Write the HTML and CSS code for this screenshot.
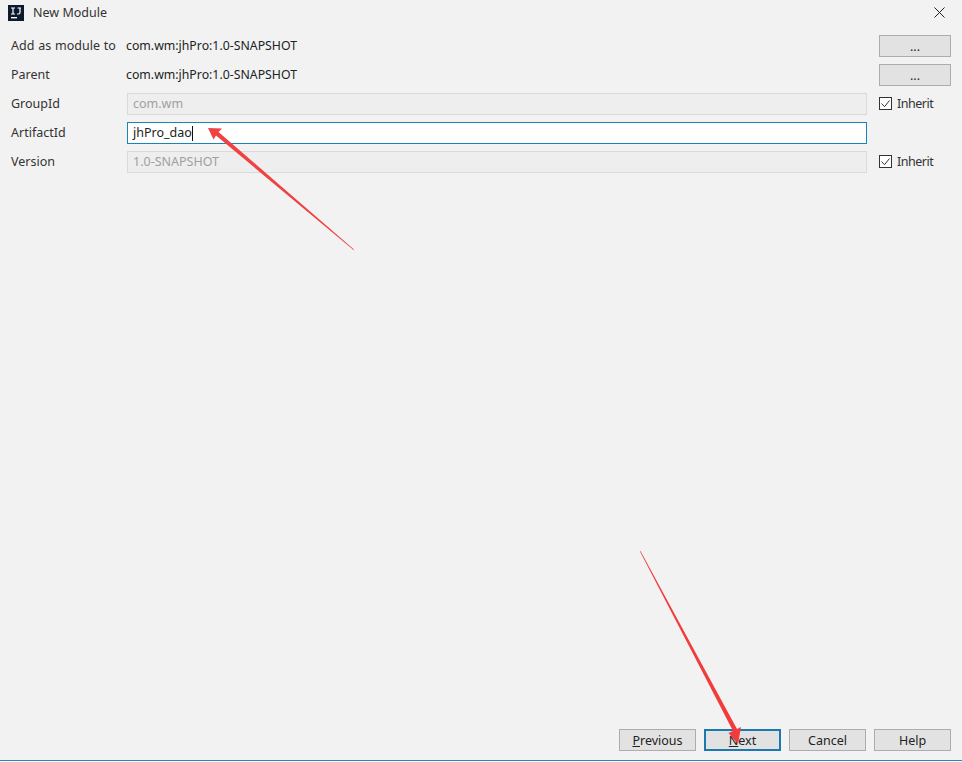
FILE: index.html
```html
<!DOCTYPE html>
<html lang="en">
<head>
<meta charset="utf-8">
<title>New Module</title>
<link rel="stylesheet" href="styles.css">
</head>
<body>
<div class="window">
  <header class="titlebar">
    <svg class="app-icon" width="16" height="16" viewBox="0 0 16 16">
      <rect width="16" height="16" fill="#0c1a2e"/>
      <rect x="3" y="12" width="6" height="1.4" fill="#fff"/>
      <path d="M3 3h4M5 3v6M3 9h4M9.5 3h3.5M12 3v4.5q0 1.5-1.5 1.5h-1.5" fill="none" stroke="#fff" stroke-width="1.2"/>
    </svg>
    <span class="title">New Module</span>
    <svg class="close" width="11" height="11" viewBox="0 0 11 11">
      <path d="M.5.5l10 10M10.5.5l-10 10" stroke="#222" stroke-width="1" fill="none"/>
    </svg>
  </header>
  <main class="form">
    <label class="lbl">Add as module to</label>
    <div class="value">com.wm:jhPro:1.0-SNAPSHOT</div>
    <button class="btn side">...</button>

    <label class="lbl">Parent</label>
    <div class="value">com.wm:jhPro:1.0-SNAPSHOT</div>
    <button class="btn side">...</button>

    <label class="lbl">GroupId</label>
    <div class="field disabled">com.wm</div>
    <div class="inherit"><span class="check"><svg width="13" height="13" viewBox="0 0 13 13"><path d="M2.5 6.5l3 3.2 5-6.2" fill="none" stroke="#333" stroke-width="1"/></svg></span>Inherit</div>

    <label class="lbl">ArtifactId</label>
    <div class="field active">jhPro_dao<span class="caret"></span></div>
    <div></div>

    <label class="lbl">Version</label>
    <div class="field disabled">1.0-SNAPSHOT</div>
    <div class="inherit"><span class="check"><svg width="13" height="13" viewBox="0 0 13 13"><path d="M2.5 6.5l3 3.2 5-6.2" fill="none" stroke="#333" stroke-width="1"/></svg></span>Inherit</div>
  </main>
  <footer class="footer">
    <button class="btn action"><u>P</u>revious</button>
    <button class="btn action primary"><u>N</u>ext</button>
    <button class="btn action">Cancel</button>
    <button class="btn action">Help</button>
  </footer>
  <div class="edge"></div>
  <div class="sliver"></div>
  <svg class="arrows" width="962" height="762" viewBox="0 0 962 762">
    <polygon points="208,128 222,128.5 218.5,132 354,249.5 353.5,250 216,135.5 213.5,139.5" fill="#f04242"/>
    <polygon points="738,744 728.5,733 733,731 640,551.5 640.5,551 737,729 741,727" fill="#f23c3c"/>
  </svg>
</div>
</body>
</html>
```
FILE: styles.css
```css
* { box-sizing: border-box; }
html, body { margin: 0; padding: 0; }
body {
  width: 962px;
  height: 762px;
  overflow: hidden;
  background: #f2f2f2;
  font-family: "Noto Sans", "Open Sans", sans-serif;
  font-size: 12.5px;
  color: #222;
}
.window {
  position: relative;
  height: 762px;
  display: flex;
  flex-direction: column;
  background: #f2f2f2;
}
.titlebar {
  height: 35px;
  flex: none;
  display: flex;
  align-items: flex-start;
  padding: 5px 17px 0 8px;
}
.app-icon { flex: none; }
.title { margin-left: 9px; line-height: 16px; color: #333; }
.close { margin-left: auto; margin-top: 2px; }
.form {
  display: grid;
  grid-template-columns: 116px 740px 72px;
  grid-auto-rows: 22px;
  row-gap: 7px;
  column-gap: 0;
  padding-left: 11px;
  align-items: center;
}
.lbl { line-height: 22px; color: #333; white-space: nowrap; word-spacing: .6px; }
.value { line-height: 22px; margin-left: -1px; color: #222; font-size: 12.3px; }
.field {
  height: 22px;
  line-height: 20px;
  border: 1px solid #d9d9d9;
  padding-left: 5px;
  white-space: nowrap;
}
.field.disabled { background: #eeeeee; color: #a0a0a0; }
.field.active {
  background: #fff;
  border-color: #1a84b8;
  color: #222;
  display: flex;
  align-items: center;
}
.caret { width: 1px; height: 15px; background: #111; }
.btn {
  font: inherit;
  color: #222;
  background: #e2e2e2;
  border: 1px solid #adadad;
  padding: 0;
  height: 22px;
}
.side { margin-left: 12px; width: 72px; }
.inherit {
  margin-left: 12px;
  display: flex;
  align-items: center;
  color: #333;
  white-space: nowrap;
  letter-spacing: -.5px;
  line-height: 20px;
  height: 21px;
  margin-top: -1px;
}
.check {
  width: 13px;
  height: 13px;
  border: 1px solid #333;
  background: #fff;
  margin-right: 5px;
  display: flex;
  position: relative;
}
.check svg { margin: -1px; flex: none; }
.footer {
  margin-top: auto;
  display: flex;
  justify-content: flex-end;
  gap: 8px;
  padding: 0 11px 9px 0;
}
.action { width: 77px; height: 22px; line-height: 19px; }
.action.primary { border: 2px solid #1a79ad; }
.edge {
  height: 1px;
  flex: none;
  background: #2b88b5;
  box-shadow: 0 -3px 4px #e6f4fb;
}
.sliver {
  height: 1px;
  flex: none;
  background: #f4fbff;
}
.arrows { position: absolute; left: 0; top: 0; pointer-events: none; }
```
